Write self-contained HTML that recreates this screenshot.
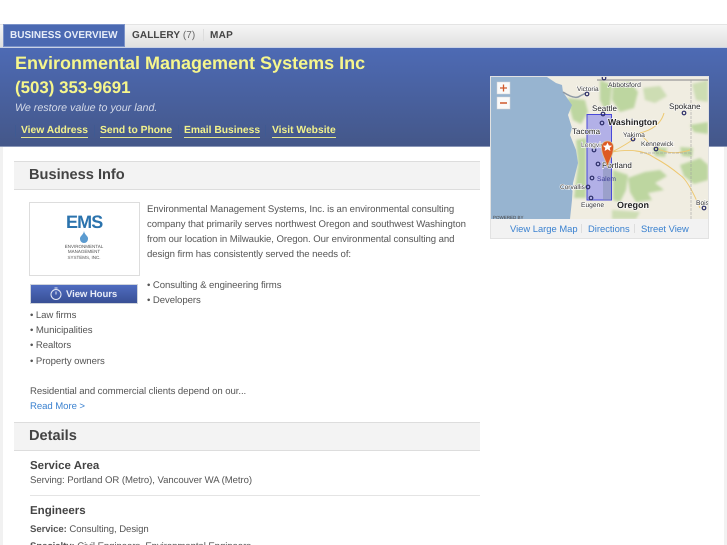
<!DOCTYPE html>
<html><head><meta charset="utf-8">
<style>
html,body{margin:0;padding:0;background:#fff;}
body{width:727px;height:545px;overflow:hidden;position:relative;font-family:"Liberation Sans",sans-serif;color:#555;text-rendering:geometricPrecision;}
#w{position:absolute;left:0;top:0;width:727px;height:545px;overflow:hidden;filter:blur(.3px);}
.a{position:absolute;white-space:nowrap;}
.t{font-size:9.6px;line-height:12px;letter-spacing:-.07px;color:#555;}
.lk{color:#3b82d0;}
.hd{position:absolute;left:14px;width:466px;background:#f3f3f3;border-top:1px solid #ddd;border-bottom:1px solid #ddd;}
.hl{font-weight:bold;font-size:10.3px;line-height:12px;color:#f2f28c;border-bottom:1px solid #e4e48a;}
.sep{position:absolute;top:125px;width:1px;height:12px;background:#3f5a92;}
.ml{font-size:9.4px;line-height:13px;color:#3b82d0;}
</style></head><body><div id="w">
<div class="a" style="left:0;top:24px;width:727px;height:22px;background:linear-gradient(#f5f5f5,#dfdfdf);border-top:1px solid #e4e4e4;"></div>
<div class="a" style="left:3px;top:24px;width:120px;height:21px;background:#4b69b2;border:1px solid #7b92c8;"></div>
<div class="a" style="left:10px;top:29.500px;font-size:10px;line-height:12px;font-weight:bold;color:#e8eef8;">BUSINESS OVERVIEW</div>
<div class="a" style="left:132px;top:29.500px;font-size:10px;line-height:12px;font-weight:bold;color:#444;letter-spacing:.1px;">GALLERY <span style="font-weight:normal;color:#666">(7)</span></div>
<div class="a" style="left:203px;top:29px;width:1px;height:12px;background:#ddd;"></div>
<div class="a" style="left:210px;top:29.500px;font-size:10px;line-height:12px;font-weight:bold;color:#444;letter-spacing:.3px;">MAP</div>

<div class="a" style="left:0;top:47px;width:727px;height:100px;background:linear-gradient(#4d6ab4,#445789);border-top:1px solid #c9d2e6;border-bottom:1px solid #8a97b8;box-sizing:border-box;"></div>
<div class="a" style="left:15px;top:53px;font-size:18px;line-height:21px;font-weight:bold;color:#f6f68c;">Environmental Management Systems Inc</div>
<div class="a" style="left:15px;top:78px;font-size:16.9px;line-height:20px;font-weight:bold;color:#f6f68c;">(503) 353-9691</div>
<div class="a" style="left:15px;top:102px;font-size:10.7px;line-height:13px;font-style:italic;color:#d3d9e8;">We restore value to your land.</div>
<div class="sep" style="left:15px"></div><div class="sep" style="left:94px"></div><div class="sep" style="left:178px"></div><div class="sep" style="left:265px"></div>
<div class="a hl" style="left:21px;top:125px;">View Address</div>
<div class="a hl" style="left:100px;top:125px;">Send to Phone</div>
<div class="a hl" style="left:184px;top:125px;">Email Business</div>
<div class="a hl" style="left:272px;top:125px;">Visit Website</div>

<div class="a" style="left:0;top:147px;width:3px;height:398px;background:#f1f1f1;"></div>
<div class="a" style="left:724px;top:147px;width:3px;height:398px;background:#f1f1f1;"></div>

<div class="hd" style="top:161px;height:27px;"></div>
<div class="a" style="left:29px;top:166px;font-size:14.6px;line-height:19px;font-weight:bold;color:#444;">Business Info</div>

<div class="a" style="left:29px;top:202px;width:109px;height:72px;border:1px solid #ddd;background:#fff;"></div>
<div class="a" style="left:66px;top:212px;font-size:18px;line-height:21px;font-weight:bold;color:#2b73ad;letter-spacing:-.9px;">EMS</div>
<svg class="a" style="left:77px;top:231px" width="14" height="12" viewBox="0 0 14 12"><path d="M7 0C7.500 4 11.500 5 11 8a4 4 0 0 1-8 0C2.500 5 6.500 4 7 0z" fill="#5b9bd0"/></svg>
<div class="a" style="left:54px;top:243.500px;width:60px;text-align:center;font-size:4.500px;line-height:5.500px;color:#555;">ENVIRONMENTAL<br>MANAGEMENT<br>SYSTEMS, INC.</div>

<div class="a" style="left:30px;top:284px;width:108px;height:20px;background:linear-gradient(#4f6cc0,#384f95);border:1px solid #cfd4dc;box-sizing:border-box;"></div>
<svg class="a" style="left:49px;top:286px" width="14" height="15" viewBox="0 0 14 15"><circle cx="7" cy="8.500" r="5" fill="none" stroke="#e6eaf5" stroke-width="1"/><path d="M7 8.500V5.500M5.500 2h3" stroke="#e6eaf5" stroke-width="1" fill="none"/></svg>
<div class="a" style="left:66px;top:289px;font-size:9.6px;line-height:12px;font-weight:bold;color:#e8ecf7;letter-spacing:-.1px;">View Hours</div>

<div class="a t" style="left:147px;top:204px;">Environmental Management Systems, Inc. is an environmental consulting</div>
<div class="a t" style="left:147px;top:219px;">company that primarily serves northwest Oregon and southwest Washington</div>
<div class="a t" style="left:147px;top:234px;">from our location in Milwaukie, Oregon. Our environmental consulting and</div>
<div class="a t" style="left:147px;top:249px;">design firm has consistently served the needs of:</div>
<div class="a t" style="left:147px;top:280px;">• Consulting &amp; engineering firms</div>
<div class="a t" style="left:147px;top:295px;">• Developers</div>
<div class="a t" style="left:30px;top:310px;">• Law firms</div>
<div class="a t" style="left:30px;top:325px;">• Municipalities</div>
<div class="a t" style="left:30px;top:340px;">• Realtors</div>
<div class="a t" style="left:30px;top:356px;">• Property owners</div>
<div class="a t" style="left:30px;top:386px;">Residential and commercial clients depend on our...</div>
<div class="a t lk" style="left:30px;top:401px;">Read More &gt;</div>

<div class="hd" style="top:422px;height:27px;"></div>
<div class="a" style="left:29px;top:427px;font-size:14.6px;line-height:19px;font-weight:bold;color:#444;">Details</div>
<div class="a" style="left:30px;top:459px;font-size:11.5px;line-height:15px;font-weight:bold;color:#444;">Service Area</div>
<div class="a t" style="left:30px;top:475px;">Serving: Portland OR (Metro), Vancouver WA (Metro)</div>
<div class="a" style="left:30px;top:495px;width:450px;height:1px;background:#e4e4e4;"></div>
<div class="a" style="left:30px;top:504px;font-size:11.5px;line-height:15px;font-weight:bold;color:#444;">Engineers</div>
<div class="a t" style="left:30px;top:524px;"><b>Service:</b> Consulting, Design</div>
<div class="a t" style="left:30px;top:541px;"><b>Specialty:</b> Civil Engineers, Environmental Engineers</div>

<!-- Map -->
<div class="a" style="left:490px;top:76px;width:219px;height:163px;background:#f2f2f2;border:1px solid #e2e2e2;box-sizing:border-box;"></div>
<svg class="a" style="left:0;top:0" width="727" height="545" viewBox="0 0 727 545">
<defs><clipPath id="m"><rect x="491" y="77" width="217" height="142"/></clipPath>
<filter id="b" x="-10%" y="-10%" width="120%" height="120%"><feGaussianBlur stdDeviation="1.200"/></filter></defs>
<g clip-path="url(#m)">
<rect x="491" y="77" width="217" height="142" fill="#f0ede1"/>
<g fill="#bdd6a0" filter="url(#b)">
<path d="M567 98L585 100 588 112 581 124 573 120Z"/>
<path d="M613 85L630 82 638 92 634 108 620 112 612 100Z"/>
<path d="M643 88L660 86 667 96 655 103 645 100Z" opacity=".7"/>
<path d="M692 84L708 80V102L696 100Z" opacity=".7"/>
<path d="M690 125L708 122V134L694 132Z"/>
<path d="M653 147L667 148 665 157 655 156Z"/>
<path d="M680 147L693 148 692 157 682 156Z"/>
<path d="M628 178L645 172 660 170 667 176 655 183 664 190 648 193 652 200 636 202 630 192Z"/>
<path d="M680 165L700 158 708 165V180L694 184 684 176Z"/>
<path d="M613 170L628 175 626 190 620 202 613 200Z"/>
<path d="M576 140L586 138 586 198 574 198 578 165Z"/>
<path d="M600 80L612 85 610 105 606 112 600 100Z"/>
<path d="M612 210L640 212 636 219H612Z" opacity=".7"/>
</g>
<path d="M491 77H547L556 83 562 85 563 92 572 105 568 115 572 128 570 135 576 150 578 163 573 183 572 200 570 219H491Z" fill="#97b4d0"/>
<path d="M563 92Q575 100 580 96L586 93" fill="none" stroke="#8f9aa6" stroke-width="1.500"/>
<path d="M612 152Q635 140 640 133 660 128 664 113M612 152Q640 147 655 158 668 165 680 175 688 180 700 208M640 133Q660 160 690 150" fill="none" stroke="#eec870" stroke-width="1"/>
<path d="M691 80V219M640 153H692" fill="none" stroke="#9e9e9e" stroke-width=".7" stroke-dasharray="3 1" opacity=".8"/>
<path d="M597 80H708" stroke="#999" stroke-width="1.300" fill="none"/>
<rect x="587" y="114.500" width="24.500" height="85.500" fill="#7474ee" fill-opacity=".5" stroke="#4949d8" stroke-width="1"/>
<path d="M603 168V200H611V168Z" fill="#7f8fa8" opacity=".45"/>
<g fill="none" stroke="#2d2f6a" stroke-width="1.200">
<circle cx="603" cy="114" r="1.800"/><circle cx="602" cy="123" r="1.800"/><circle cx="594" cy="150" r="1.800"/><circle cx="598" cy="164" r="1.800"/><circle cx="592" cy="178" r="1.800"/><circle cx="588" cy="187" r="1.800"/><circle cx="591" cy="198" r="1.800"/>
<circle cx="587" cy="94" r="1.800"/><circle cx="604" cy="78" r="1.800"/><circle cx="684" cy="113" r="1.800"/><circle cx="633" cy="139" r="1.800"/><circle cx="656" cy="149" r="1.800"/><circle cx="704" cy="208" r="1.800"/>
</g>
<g font-family="Liberation Sans,sans-serif" fill="#333" stroke="#fff" stroke-width="1.200" paint-order="stroke">
<text x="577" y="91" font-size="6.500">Victoria</text>
<text x="608" y="87" font-size="6.800">Abbotsford</text>
<text x="592" y="111" font-size="8" fill="#222">Seattle</text>
<text x="669" y="109" font-size="8" fill="#222">Spokane</text>
<text x="608" y="125" font-size="8.700" font-weight="bold" fill="#222">Washington</text>
<text x="572" y="134" font-size="8" fill="#222">Tacoma</text>
<text x="623" y="137" font-size="6.700">Yakima</text>
<text x="641" y="146" font-size="6.700">Kennewick</text>
<text x="581" y="147" font-size="6.700" fill="#555">Longview</text>
<text x="602" y="168" font-size="8" fill="#222">Portland</text>
<text x="597" y="181" font-size="6.700" fill="#44449a" stroke="none">Salem</text>
<text x="560" y="189" font-size="6.500">Corvallis</text>
<text x="581" y="207" font-size="6.700">Eugene</text>
<text x="617" y="208" font-size="9" font-weight="bold" fill="#222">Oregon</text>
<text x="696" y="205" font-size="6.700">Boise</text>
</g>
<text x="493" y="219" font-family="Liberation Sans,sans-serif" font-size="4.500" fill="#444">POWERED BY</text>
<path d="M607.500 167C605 158 601.500 155 601.500 147a6 6 0 0 1 12 0C613.500 155 610 158 607.500 167Z" fill="#dd5a24" stroke="#d9c9a0" stroke-width=".8"/>
<path d="M607.500 142.500l1.400 3 3.200.3-2.400 2.100.7 3.100-2.900-1.700-2.900 1.700.7-3.100-2.400-2.100 3.200-.3Z" fill="#fff"/>
<rect x="497" y="82" width="13" height="12" fill="#fafafa" stroke="#d5d5d5" stroke-width=".5"/>
<path d="M500 88H507M503.500 84.500V91.500" stroke="#d0592c" stroke-width="1.300"/>
<rect x="497" y="97" width="13" height="12" fill="#fafafa" stroke="#d5d5d5" stroke-width=".5"/>
<path d="M500 103H507" stroke="#d0592c" stroke-width="1.500"/>
</g>
</svg>
<div class="a ml" style="left:510px;top:222px;">View Large Map</div>
<div class="a" style="left:581px;top:224px;width:1px;height:9px;background:#ddd;"></div>
<div class="a ml" style="left:588px;top:222px;">Directions</div>
<div class="a" style="left:634px;top:224px;width:1px;height:9px;background:#ddd;"></div>
<div class="a ml" style="left:641px;top:222px;">Street View</div>
</div></body></html>
